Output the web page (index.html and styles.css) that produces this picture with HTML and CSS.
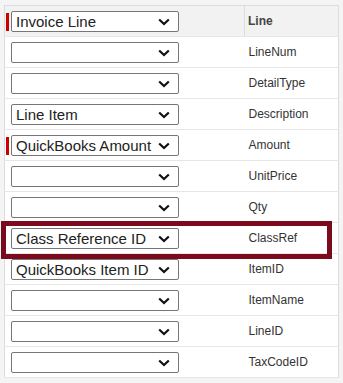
FILE: index.html
```html
<!DOCTYPE html>
<html lang="en">
  <head>
    <meta charset="UTF-8" />
    <meta name="viewport" content="width=device-width, initial-scale=1.0" />
    <title>Field Mapping</title>
    <link rel="stylesheet" href="styles.css">
  </head>
  <body>
    <div class="mapping">
      <table class="grid">
        <thead>
          <tr>
            <th class="src">
              <div class="field"><span class="req on"></span>
                <select><option>Invoice Line</option></select>
              </div>
            </th>
            <th class="col">Line</th>
          </tr>
        </thead>
        <tbody>
          <tr>
            <td class="src"><div class="field"><span class="req"></span><select><option></option></select></div></td>
            <td class="col">LineNum</td>
          </tr>
          <tr>
            <td class="src"><div class="field"><span class="req"></span><select><option></option></select></div></td>
            <td class="col">DetailType</td>
          </tr>
          <tr>
            <td class="src"><div class="field"><span class="req"></span><select><option>Line Item</option></select></div></td>
            <td class="col">Description</td>
          </tr>
          <tr>
            <td class="src"><div class="field"><span class="req on"></span><select><option>QuickBooks Amount</option></select></div></td>
            <td class="col">Amount</td>
          </tr>
          <tr>
            <td class="src"><div class="field"><span class="req"></span><select><option></option></select></div></td>
            <td class="col">UnitPrice</td>
          </tr>
          <tr>
            <td class="src"><div class="field"><span class="req"></span><select><option></option></select></div></td>
            <td class="col">Qty</td>
          </tr>
          <tr>
            <td class="src"><div class="field"><span class="req"></span><select><option>Class Reference ID</option></select></div></td>
            <td class="col">ClassRef</td>
          </tr>
          <tr>
            <td class="src"><div class="field"><span class="req"></span><select><option>QuickBooks Item ID</option></select></div></td>
            <td class="col">ItemID</td>
          </tr>
          <tr>
            <td class="src"><div class="field"><span class="req"></span><select><option></option></select></div></td>
            <td class="col">ItemName</td>
          </tr>
          <tr>
            <td class="src"><div class="field"><span class="req"></span><select><option></option></select></div></td>
            <td class="col">LineID</td>
          </tr>
          <tr>
            <td class="src"><div class="field"><span class="req"></span><select><option></option></select></div></td>
            <td class="col">TaxCodeID</td>
          </tr>
        </tbody>
      </table>
      <!-- annotation box around the ClassRef row -->
      <div class="highlight"></div>
    </div>
  </body>
</html>
```

FILE: styles.css
```css
/* page */
body {
  margin: 0;
  padding: 0;
  background-color: #f4f4f4;
  font-family: "Liberation Sans", Arial, sans-serif;
  color: #333;
}

.mapping {
  position: relative;
  padding: 5px 0 0 4px;
}

/* mapping grid */
.grid {
  border-collapse: collapse;
  width: 332px;
  table-layout: fixed;
  border: 1px solid #dcdcdc;
  background: #fff;
}
.grid tr {
  height: 31px;
}
.grid th,
.grid td {
  padding: 0;
  border-bottom: 1px solid #e6e6e6;
  text-align: left;
  vertical-align: middle;
  line-height: 14px;
}
.grid thead tr {
  background: #f2f2f2;
}
.grid .src {
  width: 238px;
  padding-left: 1px;
}
.grid .col {
  width: 90px;
  padding-left: 4px;
  font-size: 12px;
  font-weight: normal;
}
.grid th.col {
  border-left: 1px solid #dcdcdc;
  padding-left: 3px;
  font-weight: bold;
  color: #444;
}

.field {
  display: flex;
  align-items: center;
  gap: 2px;
  height: 21px;
  padding-top: 1px;
}

/* required marker */
.req {
  display: inline-block;
  width: 3px;
  height: 18px;
}
.req.on {
  background: #cc0000;
}

.field select {
  appearance: none;
  -webkit-appearance: none;
  width: 168px;
  height: 21px;
  margin: 0;
  padding: 0 22px 0 4px;
  border: 1px solid #767676;
  border-radius: 2px;
  background-color: #fff;
  background-image: url("data:image/svg+xml,%3Csvg xmlns='http://www.w3.org/2000/svg' width='12' height='8' viewBox='0 0 12 8'%3E%3Cpath d='M1.2 1.5 L6 6 L10.8 1.5' fill='none' stroke='%23111' stroke-width='2.2'/%3E%3C/svg%3E");
  background-repeat: no-repeat;
  background-position: right 8px center;
  font-family: "Liberation Sans", Arial, sans-serif;
  font-size: 15px;
  color: #222;
  line-height: 19px;
}

.highlight {
  position: absolute;
  left: 1px;
  top: 221px;
  width: 321px;
  height: 28px;
  border: 5px solid #7b0a1c;
}
```
